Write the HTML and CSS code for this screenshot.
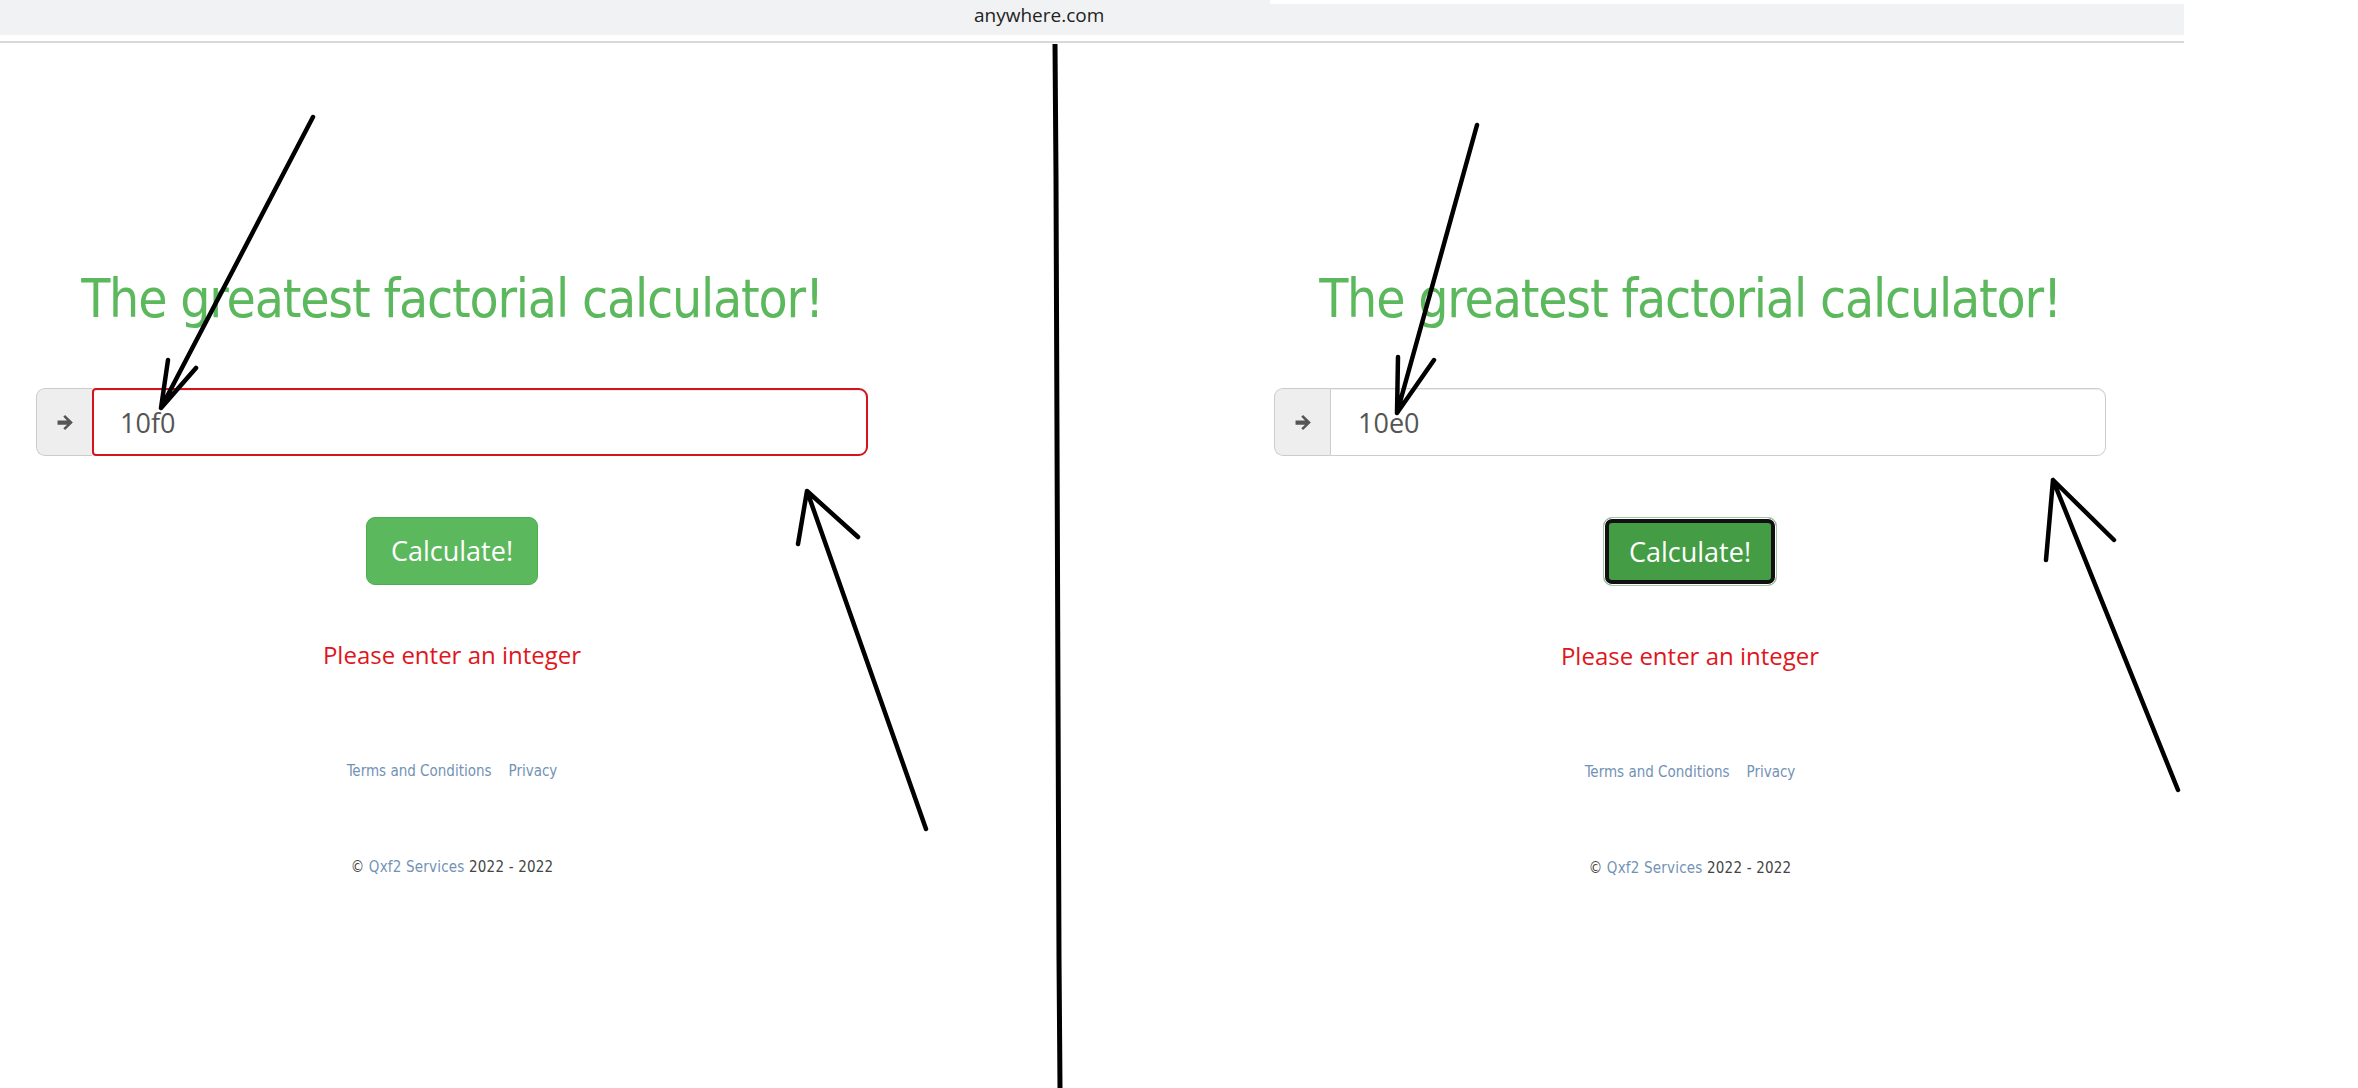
FILE: index.html
```html
<!DOCTYPE html>
<html lang="en">
<head>
<meta charset="utf-8">
<title>The greatest factorial calculator!</title>
<link rel="stylesheet" href="styles.css">
</head>
<body>
<div class="screen">
  <header class="chrome">
    <div class="chrome-tab"><span class="url">anywhere.com</span></div>
    <div class="chrome-rest"></div>
  </header>
  <div class="rule"></div>

  <main class="shots">
    <section class="panel">
      <h1 class="title">The greatest factorial calculator!</h1>
      <div class="input-group">
        <span class="addon">
          <svg class="arrow-icon" width="17" height="15" viewBox="0 0 16 14"><path d="M0.5 5H9.4L5.9 1.6L7.6 0L14.9 7L7.6 14L5.9 12.4L9.4 9H0.5Z" fill="#555"/></svg>
        </span>
        <input class="field field-invalid" type="text" value="10f0">
      </div>
      <button class="btn" type="button">Calculate!</button>
      <p class="msg">Please enter an integer</p>
      <nav class="links"><a href="#">Terms and Conditions</a><a href="#">Privacy</a></nav>
      <p class="copy">© <a href="#">Qxf2 Services</a> 2022 - 2022</p>
    </section>

    <section class="panel">
      <h1 class="title">The greatest factorial calculator!</h1>
      <div class="input-group">
        <span class="addon">
          <svg class="arrow-icon" width="17" height="15" viewBox="0 0 16 14"><path d="M0.5 5H9.4L5.9 1.6L7.6 0L14.9 7L7.6 14L5.9 12.4L9.4 9H0.5Z" fill="#555"/></svg>
        </span>
        <input class="field" type="text" value="10e0">
      </div>
      <button class="btn btn-focus" type="button">Calculate!</button>
      <p class="msg">Please enter an integer</p>
      <nav class="links"><a href="#">Terms and Conditions</a><a href="#">Privacy</a></nav>
      <p class="copy">© <a href="#">Qxf2 Services</a> 2022 - 2022</p>
    </section>
  </main>

  <svg class="ink" width="2358" height="1088" viewBox="0 0 2358 1088">
    <g fill="none" stroke="#000" stroke-width="4.5" stroke-linecap="round" stroke-linejoin="round">
      <polyline points="1055,44 1056,177 1057,437 1058,698 1059,958 1060,1088" stroke-width="5" stroke-linecap="butt"/>
      <path d="M313 117 L161 408 M168 360 L161 408 L196 368"/>
      <path d="M926 829 L807 491 M798 544 L807 491 L858 537"/>
      <path d="M1477 125 L1397 413 M1398 357 L1397 413 L1434 360"/>
      <path d="M2178 790 L2053 480 M2046 560 L2053 480 L2114 540"/>
    </g>
  </svg>
</div>
</body>
</html>
```

FILE: styles.css
```css
body {
  margin: 0;
  background: #fff;
}

.screen {
  position: relative;
  width: 2358px;
  height: 1088px;
  overflow: hidden;
  font-family: "Open Sans", "Liberation Sans", sans-serif;
}

/* browser chrome fragment */
.chrome {
  display: flex;
  width: 2184px;
  height: 35px;
}

.chrome-tab {
  width: 1270px;
  background: #f1f2f4;
  font-size: 19px;
  line-height: 30px;
  color: #222;
}

.url {
  display: block;
  margin-left: 974px;
  white-space: nowrap;
}

.chrome-rest {
  flex: 1;
  margin-top: 4px;
  background: #f1f2f4;
}

.rule {
  width: 2184px;
  height: 2px;
  margin-top: 6px;
  background: #d9d9d9;
}

/* the two page captures */
.shots {
  display: flex;
  gap: 334px;
}

.panel {
  width: 904px;
  display: flex;
  flex-direction: column;
  align-items: center;
  padding-top: 226px;
}

.title {
  margin: 0;
  font-family: "DejaVu Sans Condensed", "DejaVu Sans", sans-serif;
  font-stretch: condensed;
  font-weight: 400;
  font-size: 53px;
  line-height: 60px;
  letter-spacing: -1.2px;
  color: #5cb85c;
  white-space: nowrap;
}

.input-group {
  align-self: stretch;
  display: flex;
  height: 68px;
  margin: 59px 36px 0;
}

.addon {
  width: 56px;
  box-sizing: border-box;
  border: 1px solid #ccc;
  border-right: 0;
  border-radius: 9px 0 0 9px;
  background: #eee;
  display: flex;
  align-items: center;
  justify-content: center;
}

.arrow-icon {
  display: block;
  margin-left: 2px;
}

.field {
  flex: 1;
  min-width: 0;
  box-sizing: border-box;
  height: 68px;
  margin: 0;
  padding: 0 0 0 27px;
  border: 1px solid #ccc;
  border-radius: 0 9px 9px 0;
  background: #fff;
  box-shadow: inset 0 1px 1px rgba(0, 0, 0, 0.075);
  font-family: "Open Sans", "Liberation Sans", sans-serif;
  font-size: 27px;
  color: #555;
  outline: none;
}

.field-invalid {
  border: 2px solid #d4141c;
  border-radius: 4px 9px 9px 4px;
  padding-left: 26px;
}

.btn {
  margin-top: 61px;
  padding: 15px 24px;
  font-family: "Open Sans", "Liberation Sans", sans-serif;
  font-size: 27px;
  line-height: 36px;
  color: #fff;
  background: #5cb85c;
  border: 1.5px solid #4cae4c;
  border-radius: 9px;
}

.btn-focus {
  background: #449d44;
  border: 1px solid #a3c8a3;
  padding: 15.5px 24.5px;
  box-shadow: inset 0 0 0 1px #fff, inset 0 0 0 5px #111;
}

.msg {
  margin: 55px 0 0;
  font-size: 24px;
  line-height: 30px;
  color: #e0161c;
}

.links {
  display: flex;
  gap: 17px;
  margin-top: 88px;
  font-family: "DejaVu Sans Condensed", "DejaVu Sans", sans-serif;
  font-stretch: condensed;
  font-size: 15px;
  line-height: 26px;
}

.links a,
.copy a {
  color: #7292b5;
  text-decoration: none;
}

.copy {
  margin: 70px 0 0;
  font-family: "DejaVu Sans Condensed", "DejaVu Sans", sans-serif;
  font-stretch: condensed;
  font-size: 15px;
  line-height: 26px;
  letter-spacing: 0.2px;
  color: #444;
}

/* hand-drawn annotations laid over the captures */
.ink {
  position: absolute;
  left: 0;
  top: 0;
  pointer-events: none;
}
```
